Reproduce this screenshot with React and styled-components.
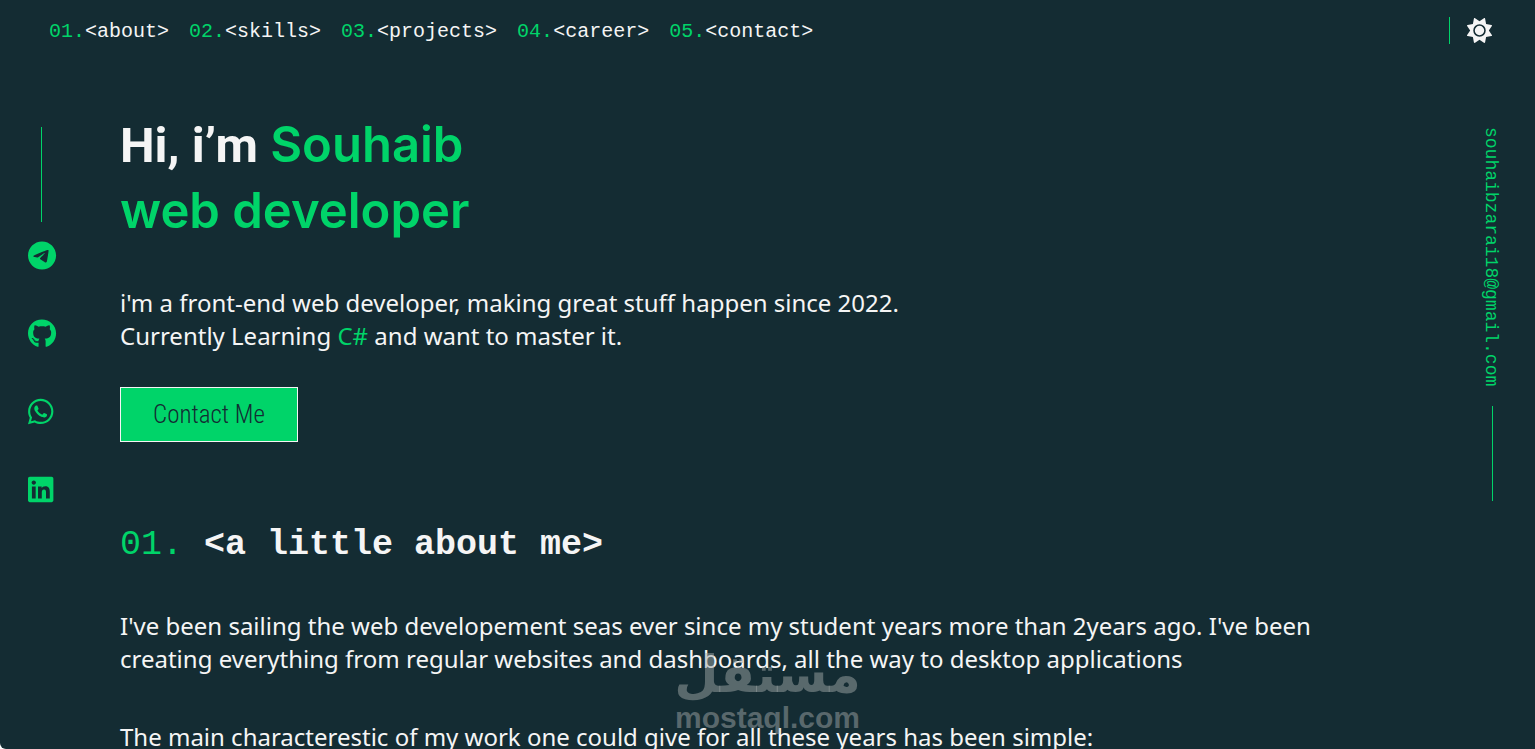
import React from 'react';
import styled, { createGlobalStyle } from 'styled-components';
import { FaGithub, FaLinkedin, FaSun, FaTelegram, FaWhatsapp } from 'react-icons/fa6';

const background = '#142c33';
const green = '#00d469';
const white = '#f5f5f5';
const mono = '"Liberation Mono", monospace';
const sans = '"Noto Sans", sans-serif';

const GlobalStyle = createGlobalStyle`
    * {
        box-sizing: border-box;
    }
    body {
        background-color: #ffffff;
        margin: 0;
    }
    h1, h2, p, ul {
        margin: 0;
        padding: 0;
    }
    a {
        color: inherit;
        text-decoration: none;
    }
`;

const Page = styled.div`
    background-color: ${background};
    border-bottom-left-radius: 6px;
    color: ${white};
    font-family: ${sans};
    height: 100vh;
    overflow: hidden;
    position: relative;
`;

const Header = styled.header`
    align-items: center;
    display: flex;
    height: 60px;
    justify-content: space-between;
    padding: 0 43px 0 49px;
`;

const NavList = styled.ul`
    display: flex;
    font-family: ${mono};
    font-size: 20px;
    gap: 20px;
    line-height: 24px;
    list-style: none;
    padding-top: 4px;
`;

const Green = styled.span`
    color: ${green};
`;

const ThemeSwitch = styled.div`
    align-items: center;
    border-left: 1px solid ${green};
    display: flex;
    height: 27px;
    padding-left: 17px;
`;

const ThemeButton = styled.button`
    background: none;
    border: 0;
    color: ${white};
    cursor: pointer;
    display: flex;
    font-size: 25px;
    padding: 0;
`;

const Body = styled.div`
    display: grid;
    grid-template-columns: 120px 1fr 175px;
`;

const SocialRail = styled.aside`
    align-items: flex-start;
    display: flex;
    flex-direction: column;
    padding: 67px 0 0 28px;
`;

const Line = styled.div`
    background-color: ${green};
    height: 95px;
    width: 1px;
`;

const SocialLine = styled(Line)`
    margin-left: 13px;
`;

const SocialList = styled.ul`
    display: flex;
    flex-direction: column;
    gap: 49px;
    list-style: none;
    margin-top: 19px;
`;

const SocialLink = styled.a`
    display: flex;
    font-size: 29px;

    && {
        color: ${green};
    }
`;

const EmailRail = styled.aside`
    align-items: flex-end;
    display: flex;
    flex-direction: column;
    gap: 20px;
    padding: 67px 32px 0 0;
`;

const EmailLink = styled.a`
    font-family: ${mono};
    font-size: 18px;
    line-height: 24px;
    writing-mode: vertical-rl;

    && {
        color: ${green};
    }
`;

const EmailLine = styled(Line)`
    margin-right: 10px;
`;

const Main = styled.main`
    padding-top: 52px;
`;

const Title = styled.h1`
    font-family: Inter, sans-serif;
    font-size: 49px;
    font-weight: 600;
    line-height: 65px;
`;

const Greeting = styled.span`
    font-family: Roboto, sans-serif;
    font-weight: 700;
`;

const Text = styled.p`
    font-size: 24px;
    line-height: 33px;
`;

const HeroText = styled(Text)`
    margin-top: 43px;
`;

const ContactButton = styled.button`
    background-color: ${green};
    border: 1px solid ${white};
    color: ${background};
    cursor: pointer;
    display: block;
    font-family: "Roboto Condensed", Roboto, sans-serif;
    font-size: 25px;
    font-weight: 300;
    line-height: 33px;
    margin-top: 35px;
    padding: 10px 32px;
`;

const SectionTitle = styled.h2`
    font-family: ${mono};
    font-size: 35px;
    font-weight: 700;
    line-height: 44px;
    margin-top: 81px;
`;

const SectionNumber = styled(Green)`
    font-weight: 400;
`;

const AboutText = styled.div`
    display: flex;
    flex-direction: column;
    gap: 45px;
    margin-top: 42px;
`;

const Watermark = styled.div`
    bottom: 15px;
    color: rgba(158, 165, 166, 0.5);
    font-weight: 700;
    left: 0;
    pointer-events: none;
    position: absolute;
    right: 0;
    text-align: center;
`;

const WatermarkArabic = styled.div`
    font-family: "DejaVu Sans", sans-serif;
    font-size: 51px;
    line-height: 54px;
`;

const WatermarkLatin = styled.div`
    font-family: "Liberation Sans", sans-serif;
    font-size: 30px;
    line-height: 32px;
`;

const sections = ['about', 'skills', 'projects', 'career', 'contact'];

const socials = [
    { name: 'Telegram', Icon: FaTelegram },
    { name: 'GitHub', Icon: FaGithub },
    { name: 'WhatsApp', Icon: FaWhatsapp },
    { name: 'LinkedIn', Icon: FaLinkedin },
];

const App = () => {
    return (
        <>
            <GlobalStyle />
            <Page>
                <Header>
                    <nav>
                        <NavList>
                            {sections.map((section, index) => (
                                <li key={section}>
                                    <a href={`#${section}`}>
                                        <Green>{`0${index + 1}.`}</Green>
                                        {`<${section}>`}
                                    </a>
                                </li>
                            ))}
                        </NavList>
                    </nav>
                    <ThemeSwitch>
                        <ThemeButton type="button" aria-label="Toggle theme">
                            <FaSun />
                        </ThemeButton>
                    </ThemeSwitch>
                </Header>
                <Body>
                    <SocialRail>
                        <SocialLine />
                        <SocialList>
                            {socials.map(({ name, Icon }) => (
                                <li key={name}>
                                    <SocialLink href={`#${name.toLowerCase()}`} aria-label={name}>
                                        <Icon preserveAspectRatio="xMinYMid meet" />
                                    </SocialLink>
                                </li>
                            ))}
                        </SocialList>
                    </SocialRail>
                    <Main>
                        <Title>
                            <Greeting>Hi, i’m </Greeting>
                            <Green>Souhaib</Green>
                            <br />
                            <Green>web developer</Green>
                        </Title>
                        <HeroText>
                            i'm a front-end web developer, making great stuff happen since 2022.
                            <br />
                            Currently Learning <Green>C#</Green> and want to master it.
                        </HeroText>
                        <ContactButton type="button">Contact Me</ContactButton>
                        <SectionTitle id="about">
                            <SectionNumber>01.</SectionNumber>
                            {' <a little about me>'}
                        </SectionTitle>
                        <AboutText>
                            <Text>
                                I've been sailing the web developement seas ever since my student years
                                more than 2years ago. I've been creating everything from regular
                                websites and dashboards, all the way to desktop applications
                            </Text>
                            <Text>
                                The main characterestic of my work one could give for all these years
                                has been simple:
                            </Text>
                        </AboutText>
                    </Main>
                    <EmailRail>
                        <EmailLink href="mailto:souhaibzarai18@gmail.com">
                            souhaibzarai18@gmail.com
                        </EmailLink>
                        <EmailLine />
                    </EmailRail>
                </Body>
                <Watermark>
                    <WatermarkArabic lang="ar">مستقل</WatermarkArabic>
                    <WatermarkLatin>mostaql.com</WatermarkLatin>
                </Watermark>
            </Page>
        </>
    );
};

export default App;
